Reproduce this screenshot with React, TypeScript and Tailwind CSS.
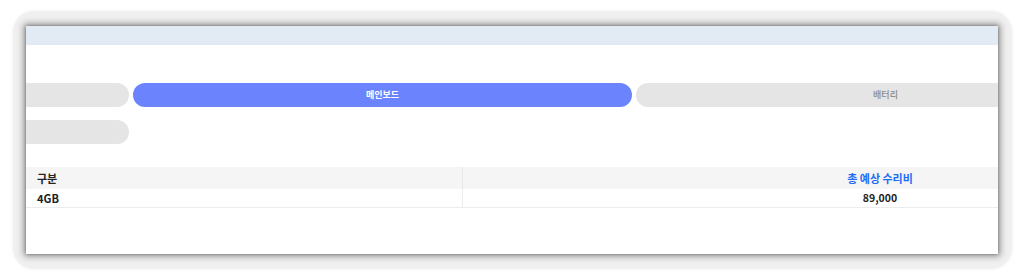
const tabs = [
  { label: "", active: false },
  { label: "메인보드", active: true },
  { label: "배터리", active: false },
  { label: "", active: false },
]

export default function App() {
  return (
    <div className="w-[1024px] h-[280px] bg-white overflow-hidden pt-[11px] pl-[13px] font-['Noto_Sans_CJK_KR','Noto_Sans',sans-serif]">
      <div className="w-[999px] h-[258px] rounded-[21px] bg-[#f0f0f0] shadow-[0_0_3px_1px_#f6f6f6] pt-[15px] pl-[13px]">
        <div className="w-[972px] h-[228px] bg-white shadow-[0_0_7px_2px_rgba(0,0,0,0.4),0_0_3px_0_rgba(0,0,0,0.3)]">
          <div className="w-full h-full overflow-hidden">
            <div className="h-[19px] bg-[#e2eaf3]" />

            <div className="mt-[38px] ml-[-396px] grid grid-cols-[499px_499px_499px] gap-x-[4px] gap-y-[13px] w-[1505px]">
              {tabs.map((t, i) => (
                <div
                  key={i}
                  className={
                    t.active
                      ? "h-[24px] rounded-full bg-[#6b84fe] text-white text-[9px] font-bold flex items-center justify-center"
                      : "h-[24px] rounded-full bg-[#e5e5e5] text-[#8a8a8a] text-[9px] font-medium flex items-center justify-center"
                  }
                >
                  {t.label}
                </div>
              ))}
            </div>

            <div className="mt-[23px] w-[1271px] text-[11px]">
              <div className="flex h-[22px] bg-[#f5f5f5] font-bold">
                <div className="w-[437px] pl-[11px] flex items-center text-[#222] border-r border-[#e8e8e8]">구분</div>
                <div className="w-[834px] flex items-center justify-center text-[#1e6cf5]">총 예상 수리비</div>
              </div>
              <div className="flex h-[19px] border-b border-[#ececec]">
                <div className="w-[437px] pl-[11px] flex items-center text-[#222] font-semibold border-r border-[#ececec]">4GB</div>
                <div className="w-[834px] flex items-center justify-center text-[#222] text-[10.5px] font-semibold">89,000</div>
              </div>
            </div>
          </div>
        </div>
      </div>
    </div>
  )
}
